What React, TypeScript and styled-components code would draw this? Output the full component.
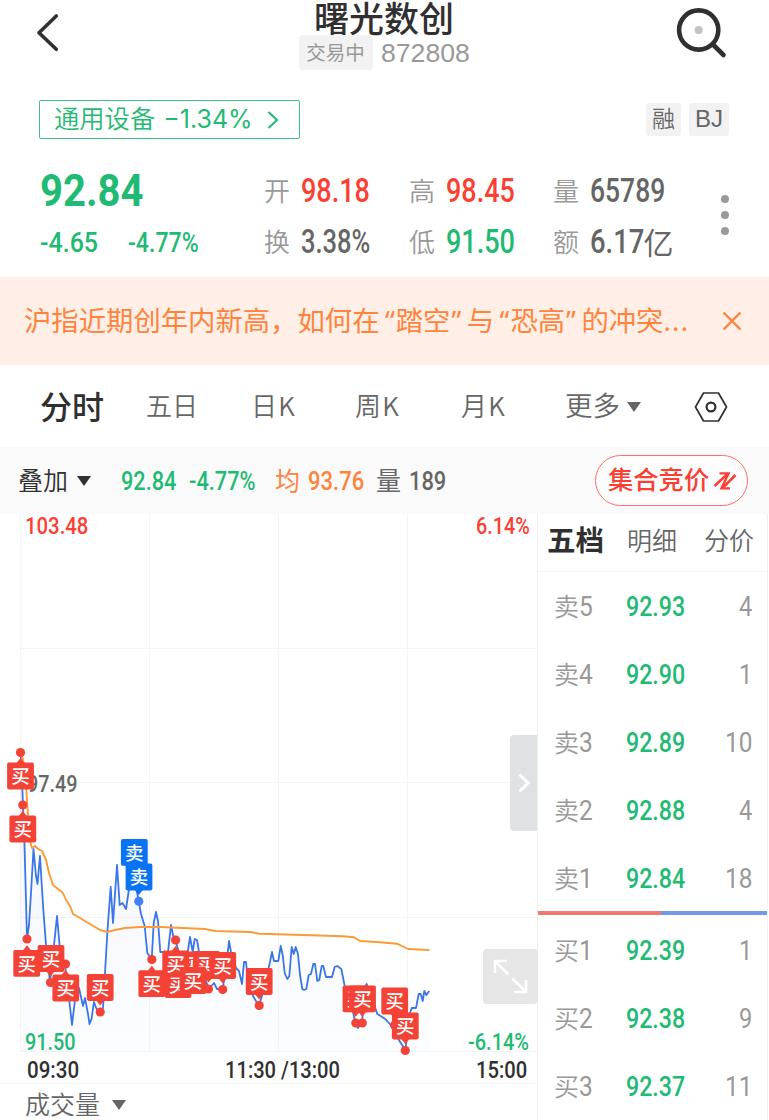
import React, { useLayoutEffect, useRef, useState } from 'react';
import styled, { createGlobalStyle } from 'styled-components';

const GREEN = '#1fba73';
const RED = '#fb3f33';
const ORANGE = '#ff833c';
const INK = '#303030';
const GREY = '#666';
const MUTED = '#999';

const Global = createGlobalStyle`
  * { box-sizing: border-box; }
  body { margin: 0; background: #fff; overflow: hidden; font-family: "Noto Sans CJK SC", sans-serif; }
`;

const Page = styled.div`
  width: 769px;
  height: 1120px;
  overflow: hidden;
  display: flex;
  flex-direction: column;
  background: #fff;
  color: ${INK};
`;

/* ---------- condensed figures ---------- */

const FigureBox = styled.span<{ $w: number; $size: number; $color: string; $weight: number; $font: string }>`
  display: inline-block;
  flex: none;
  width: ${p => p.$w}px;
  height: ${p => p.$size}px;
  line-height: ${p => p.$size}px;
  font-family: ${p => p.$font}, "Noto Sans CJK SC", sans-serif;
  font-size: ${p => p.$size}px;
  font-weight: ${p => p.$weight};
  color: ${p => p.$color};
  white-space: nowrap;
`;

const FigureText = styled.span`
  display: inline-block;
  transform-origin: 0 50%;
`;

type FigureProps = { w: number; size: number; color?: string; weight?: number; font?: string; children: string };

function Figure({ w, size, color = INK, weight = 500, font = 'Roboto', children }: FigureProps) {
  const ref = useRef<HTMLSpanElement>(null);
  const [scale, setScale] = useState(1);
  useLayoutEffect(() => {
    if (ref.current) setScale(w / ref.current.offsetWidth);
  }, [w, size, children]);
  return (
    <FigureBox $w={w} $size={size} $color={color} $weight={weight} $font={font}>
      <FigureText ref={ref} style={{ transform: `scaleX(${scale})` }}>{children}</FigureText>
    </FigureBox>
  );
}

const Label = styled.span<{ $size?: number; $color?: string; $weight?: number; $spacing?: number }>`
  flex: none;
  padding-bottom: 3px;
  font-size: ${p => p.$size ?? 26}px;
  line-height: 1;
  font-weight: ${p => p.$weight ?? 350};
  letter-spacing: ${p => p.$spacing ?? 0}px;
  color: ${p => p.$color ?? MUTED};
  white-space: nowrap;
`;

/* ---------- header ---------- */

const Header = styled.header`
  height: 99px;
  flex: none;
  display: flex;
  justify-content: space-between;
  align-items: flex-start;
  padding: 8px 42px 0 36px;
`;

const TitleBlock = styled.div`
  margin: -9px 0 0 31px;
  display: flex;
  flex-direction: column;
  align-items: center;
`;

const Title = styled.h1`
  margin: 0 0 1px;
  font-size: 35px;
  line-height: 35px;
  font-weight: 500;
`;

const CodeRow = styled.div`
  display: flex;
  align-items: center;
  gap: 8px;
`;

const Status = styled.span`
  width: 74px;
  height: 35px;
  border-radius: 4px;
  background: #f2f2f2;
  color: ${MUTED};
  font-size: 19.5px;
  line-height: 34px;
  text-align: center;
`;

const SectorRow = styled.div`
  height: 40px;
  flex: none;
  display: flex;
  justify-content: space-between;
  align-items: center;
  padding: 0 40px 0 39px;
`;

const Sector = styled.div`
  width: 261px;
  height: 39px;
  border: 1.5px solid #3cc286;
  border-radius: 2px;
  display: flex;
  align-items: center;
  padding: 1px 0 0 14px;
`;

const Tags = styled.div`
  display: flex;
  gap: 8px;
`;

const Tag = styled.span<{ $w: number }>`
  width: ${p => p.$w}px;
  height: 33px;
  border-radius: 3px;
  background: #f2f2f2;
  display: flex;
  align-items: center;
  justify-content: center;
`;

/* ---------- quote ---------- */

const Quote = styled.section`
  height: 138px;
  flex: none;
  display: grid;
  grid-template-columns: 224px 145px 144px 155px auto;
  grid-template-rows: 51px 51px;
  align-items: center;
  padding: 27px 0 0 40px;
`;

const Cell = styled.div<{ $gap?: number }>`
  display: flex;
  align-items: center;
  gap: ${p => p.$gap ?? 10.5}px;
`;

const Dots = styled.div`
  grid-column: 5;
  grid-row: 1 / 3;
  display: flex;
  flex-direction: column;
  gap: 8px;
  padding: 0 0 4px 12.5px;
`;

const Dot = styled.i`
  width: 8px;
  height: 8px;
  border-radius: 50%;
  background: ${MUTED};
`;

/* ---------- banner, tabs, toolbar ---------- */

const Banner = styled.div`
  height: 88px;
  flex: none;
  background: #ffefe6;
  display: flex;
  align-items: center;
  justify-content: space-between;
  padding: 0 27px 0 24px;
`;

const BannerText = styled.span`
  font-size: 27.35px;
  line-height: 1;
  padding-bottom: 1px;
  color: ${ORANGE};
  white-space: nowrap;
`;

const Mark = styled.span<{ $open?: boolean }>`
  display: inline-block;
  width: 16.3px;
  padding: 0 1px;
  text-align: ${p => (p.$open ? 'right' : 'left')};
  font-family: "Noto Sans", sans-serif;
  line-height: 1;
`;

const Ellipsis = styled.span`
  font-family: "Noto Sans", sans-serif;
  line-height: 1;
  letter-spacing: 1.3px;
`;

const Tabs = styled.nav`
  height: 82px;
  flex: none;
  display: grid;
  grid-template-columns: 106px 105px 104px 106px 104px 129px 40px;
  align-items: center;
  padding: 1px 0 0 40px;
`;

const Caret = styled.i<{ $color: string }>`
  border: 7px solid transparent;
  border-top: 10px solid ${p => p.$color};
  border-bottom: 0;
`;

const Toolbar = styled.div`
  height: 67px;
  flex: none;
  background: #fafafa;
  display: flex;
  align-items: center;
  padding: 0 21px 0 18px;
`;

const Space = styled.span<{ $w: number }>`
  flex: none;
  width: ${p => p.$w}px;
`;

const Auction = styled.button`
  margin: 0 0 0 auto;
  width: 153px;
  height: 51px;
  border: 1.3px solid #fa7068;
  border-radius: 26px;
  background: #fdfdfd;
  display: flex;
  align-items: center;
  padding: 0 0 0 12px;
  gap: 4px;
  font-family: inherit;
`;

/* ---------- body ---------- */

const Body = styled.main`
  flex: 1 1 0;
  min-height: 0;
  display: flex;
`;

const ChartPane = styled.div`
  position: relative;
  width: 537px;
  flex: none;
  display: flex;
  flex-direction: column;
`;

const Plot = styled.svg`
  display: block;
  flex: none;
`;

const Overlay = styled.div<{ $x: number; $y: number }>`
  position: absolute;
  left: ${p => p.$x}px;
  top: ${p => p.$y}px;
  display: flex;
`;

const Axis = styled.div`
  height: 32px;
  flex: none;
  display: grid;
  grid-template-columns: 198px 1fr auto;
  align-items: center;
  padding: 5px 10px 0 27px;
  border-bottom: 1px solid #f3f3f3;
`;

const Volume = styled.div`
  display: flex;
  align-items: center;
  gap: 12px;
  height: 42px;
  flex: none;
  padding-left: 25px;
`;

const Handle = styled.div`
  width: 27px;
  height: 96px;
  border-radius: 4px 0 0 4px;
  background: #dfe1e4;
  display: flex;
  align-items: center;
  justify-content: center;
`;

const Expand = styled.div`
  width: 55px;
  height: 55px;
  border-radius: 4px;
  background: #e6e6e6;
`;

const Book = styled.aside`
  width: 231px;
  flex: none;
  border-left: 1px solid #f0f0f0;
  border-right: 1px solid #f0f0f0;
  display: flex;
  flex-direction: column;
`;

const BookTabs = styled.div`
  height: 58px;
  flex: none;
  border-bottom: 1px solid #f3f3f3;
  margin-bottom: 1px;
  display: grid;
  grid-template-columns: 80px 77px 60px;
  align-items: center;
  padding: 0 0 3px 9px;
`;

const Level = styled.div`
  height: 68px;
  flex: none;
  display: grid;
  grid-template-columns: 72px 1fr auto;
  align-items: center;
  padding: 0 15px 0 16px;
`;

const LevelName = styled.span`
  display: flex;
  align-items: center;
`;

const Ratio = styled.div`
  height: 4px;
  flex: none;
  margin: -2px 0 2px;
  background: linear-gradient(90deg, #f07b73 0 123px, #7398eb 123px);
`;

/* ---------- data ---------- */

const PRICE =
  '20.5,752 22,780 23,805 24.5,845 26,900 27,939 29,925 31,893 33.5,849 36,876 37.5,884 40,856 43,905 46,945 50,982 54,945 57,916 60,950 65,965 68,990 70,1007 72,1025 75,1000 79,988 83,1006 85,998 88,1014 89.5,1024 91.5,1019 94,1002 97,1010 100,1012 103,1008 105,973 107.5,930 110.7,887 113,923 117,865 119.7,905 122.5,903 126,909 128.7,891 133,870 138.7,901 141,914 144.7,926 147.3,953 151.7,959 153.7,923 156,912 158,921 160.3,952 168,952 171,925 173,935 175.5,940 180,957 187,957 190,937 192.7,952 194.7,939 197,940 199,952 204,975 208.7,989 214,983 217,989 222.7,989 226,967 229,941 231,952 236,968 239,971 242,984 244,962 246,962 248,980 253,996 259,1006 262.7,993 270,962 272,952 274,961 278.3,961 280.7,946 282.7,955 284.7,973 287.3,979 289.3,976 291.7,947 293.7,954 295.7,947 298,954 300,975 302.3,989 304,990 306.3,989 308.7,975 311,974 313.3,964 315,964 317.3,981 319.3,980 321.7,966 323.3,966 326,977 332,977 334.7,967 337.3,966 341.3,969 344.7,986 352.7,1010 355.3,1023 358,1028 362,1023 365,987 366.7,984 375.3,1008 377.3,1014 380.7,1016 385.3,1019 390.7,1025 397,1037 405.3,1050 410,1013 411.7,1008 416,1008 418.7,994 420.7,994 422.7,1001 424.3,991 426.3,995 429.3,991';

const AVERAGE =
  '22,755 25,770 28,815 30.5,843 32,848 35,846 38,849 42,851 46,860 49,873 53,885 58,889 63,893 66,900 70,906 73,914 80,918 90,924 100,930 107,932 115,930 125,928 140,927 160,927 205,929 215,931 250,932 260,933.7 303,935 343,936.3 354,937.3 360,941 377,942 397,943.7 402,946 408,949 429.5,950';

type Trade = { x: number; y: number; dx?: number; dy?: number; sell?: boolean };
/* x, y: centre of the flag; dx, dy: the trade point on the line */
const TRADES: Trade[] = [
  { x: 20.5, y: 776, dx: 20.5, dy: 752.5 },
  { x: 22.8, y: 829, dx: 22.8, dy: 805 },
  { x: 26.7, y: 963.3, dx: 27, dy: 939 },
  { x: 51, y: 958.5, dx: 50.5, dy: 982.5 },
  { x: 65.8, y: 988, dx: 65.5, dy: 964 },
  { x: 100.2, y: 987.5, dx: 100.2, dy: 1012 },
  { x: 134.3, y: 852.3, sell: true },
  { x: 139, y: 877, dx: 138.8, dy: 901.3, sell: true },
  { x: 151.8, y: 983.7, dx: 151.8, dy: 959.5 },
  { x: 191, y: 965 },
  { x: 206.5, y: 964.5, dx: 208.5, dy: 989 },
  { x: 178, y: 984.5 },
  { x: 175.7, y: 964, dx: 175.6, dy: 940 },
  { x: 193, y: 980.5 },
  { x: 222.7, y: 965.5, dx: 222.7, dy: 989.5 },
  { x: 259.2, y: 981.5, dx: 259.2, dy: 1005.5 },
  { x: 356, y: 998.8, dx: 355.8, dy: 1023 },
  { x: 362.5, y: 998.8, dx: 362.3, dy: 1023 },
  { x: 394.7, y: 1001, dx: 394.7, dy: 1025 },
  { x: 405.3, y: 1026, dx: 405.3, dy: 1050.5 },
];

const SELLS = [['5', '92.93', '4'], ['4', '92.90', '1'], ['3', '92.89', '10'], ['2', '92.88', '4'], ['1', '92.84', '18']];
const BUYS = [['1', '92.39', '1'], ['2', '92.38', '9'], ['3', '92.37', '11']];

/* ---------- parts ---------- */

function Flag({ x, y, dx, dy, sell }: Trade) {
  const fill = sell ? '#0873f4' : '#f54236';
  const below = dy !== undefined && dy > y;
  const edge = below ? y + 13 : y - 13;
  const tip = below ? edge + 5 : edge - 5;
  return (
    <g>
      {dx !== undefined && <circle cx={dx} cy={dy} r={4.6} fill={sell ? '#4480fa' : fill} />}
      {dx !== undefined && <path d={`M${dx - 4} ${edge}L${dx} ${tip}L${dx + 4} ${edge}Z`} fill={fill} />}
      <rect x={x - 13.4} y={y - 13.4} width={26.8} height={26.8} rx={1.8} fill={fill} />
      <text x={x} y={y + 7.3} fontSize={18.5} textAnchor="middle" fill="#fff" fontWeight={500}>{sell ? '卖' : '买'}</text>
    </g>
  );
}

function Chart() {
  return (
    <Plot width={537} height={538} viewBox="0 514 537 538">
      <defs>
        <linearGradient id="area" x1="0" y1="0" x2="0" y2="1">
          <stop offset="0" stopColor="#3b78f0" stopOpacity="0.07" />
          <stop offset="1" stopColor="#3b78f0" stopOpacity="0.015" />
        </linearGradient>
      </defs>
      <path d="M20.5 514V1052M149.5 514V1052M278.5 514V1052M407.5 514V1052M20 648.5H537M20 782.5H537M20 917.5H537M20 1051.5H537" stroke="#f5f5f6" fill="none" />
      <polygon points={`${PRICE} 429.3,1052 20.5,1052`} fill="url(#area)" />
      <polyline points={PRICE} fill="none" stroke="#3a76ea" strokeWidth={1.8} strokeLinejoin="round" />
      <polyline points={AVERAGE} fill="none" stroke="#fd9a35" strokeWidth={1.9} strokeLinejoin="round" />
    </Plot>
  );
}

function Flags() {
  return (
    <Plot width={537} height={560} viewBox="0 514 537 560" fontFamily='"Noto Sans CJK SC", sans-serif'>
      {TRADES.map((t, i) => <Flag key={i} {...t} />)}
    </Plot>
  );
}

function Levels({ side, rows }: { side: string; rows: string[][] }) {
  return (
    <>
      {rows.map(([n, price, qty]) => (
        <Level key={n}>
          <LevelName>
            <Label $size={25}>{side}</Label>
            <Figure w={14} size={28} color={MUTED} weight={400}>{n}</Figure>
          </LevelName>
          <Figure w={59} size={27.5} color={GREEN}>{price}</Figure>
          <Figure w={qty.length * 13.5} size={28} color={MUTED} weight={400}>{qty}</Figure>
        </Level>
      ))}
    </>
  );
}

export default function App() {
  return (
    <Page>
      <Global />
      <Header>
        <svg width="26" height="50" viewBox="36 8 26 50" fill="none" stroke={INK} strokeWidth="3.6" strokeLinecap="round" strokeLinejoin="round">
          <path d="M56.3 16L39 32.7L56.3 49.3" />
        </svg>
        <TitleBlock>
          <Title>曙光数创</Title>
          <CodeRow>
            <Status>交易中</Status>
            <Figure w={89} size={26} color={MUTED} weight={400} font='"Liberation Sans"'>872808</Figure>
          </CodeRow>
        </TitleBlock>
        <svg width="52" height="52" viewBox="675 8 52 52" fill="none">
          <circle cx="698.7" cy="30" r="19.6" stroke={INK} strokeWidth="4.6" />
          <path d="M712.5 44L723.5 55" stroke={INK} strokeWidth="4.6" strokeLinecap="round" />
          <circle cx="698.7" cy="30" r="4" fill="#c2c2c2" />
        </svg>
      </Header>

      <SectorRow>
        <Sector>
          <Label $size={25.3} $color={GREEN}>通用设备</Label>
          <Space $w={8} />
          <Figure w={89} size={25} color={GREEN} weight={400} font="Inter">−1.34%</Figure>
          <Space $w={14} />
          <svg width="14" height="20" fill="none" stroke={GREEN} strokeWidth="2"><path d="M2.5 2L11 10L2.5 18" /></svg>
        </Sector>
        <Tags>
          <Tag $w={35}><Label $size={23} $color={GREY}>融</Label></Tag>
          <Tag $w={40}><Figure w={28} size={24} color={GREY} weight={400} font='"Liberation Sans"'>BJ</Figure></Tag>
        </Tags>
      </SectorRow>

      <Quote>
        <Cell><Figure w={103} size={43.5} color={GREEN} weight={700}>92.84</Figure></Cell>
        <Cell><Label>开</Label><Figure w={69} size={32.5} color={RED}>98.18</Figure></Cell>
        <Cell><Label>高</Label><Figure w={69} size={32.5} color={RED}>98.45</Figure></Cell>
        <Cell><Label>量</Label><Figure w={75} size={32.5} color={GREY}>65789</Figure></Cell>
        <Dots><Dot /><Dot /><Dot /></Dots>
        <Cell $gap={30}>
          <Figure w={58} size={28} color={GREEN}>-4.65</Figure>
          <Figure w={71} size={28} color={GREEN}>-4.77%</Figure>
        </Cell>
        <Cell><Label>换</Label><Figure w={69} size={32.5} color={GREY}>3.38%</Figure></Cell>
        <Cell><Label>低</Label><Figure w={69} size={32.5} color={GREEN}>91.50</Figure></Cell>
        <Cell $gap={0}>
          <Label>额</Label><Space $w={10.5} />
          <Figure w={54} size={32.5} color={GREY}>6.17</Figure>
          <Label $size={30} $color={GREY} $weight={400}>亿</Label>
        </Cell>
      </Quote>

      <Banner>
        <BannerText>
          沪指近期创年内新高，如何在<Mark $open>“</Mark>踏空<Mark>”</Mark>与<Mark $open>“</Mark>恐高<Mark>”</Mark>的冲突<Ellipsis>...</Ellipsis>
        </BannerText>
        <svg width="20" height="20" fill="none" stroke={ORANGE} strokeWidth="2.4"><path d="M1.5 1.5L18.5 18.5M18.5 1.5L1.5 18.5" /></svg>
      </Banner>

      <Tabs>
        <Label $size={32} $color={INK} $weight={500}>分时</Label>
        <Label $color={GREY}>五日</Label>
        <Label $color={GREY} $spacing={1.2}>日K</Label>
        <Label $color={GREY} $spacing={1.2}>周K</Label>
        <Label $color={GREY} $spacing={1.2}>月K</Label>
        <Cell $gap={7}><Label $size={27.5} $color={GREY}>更多</Label><Caret $color={GREY} /></Cell>
        <svg width="34" height="32" fill="none" stroke={INK} strokeWidth="1.7" strokeLinejoin="round">
          <path d="M9.5 2H24.5L32.5 16L24.5 30H9.5L1.5 16Z" />
          <circle cx="17" cy="16" r="4.4" strokeWidth="2.2" />
        </svg>
      </Tabs>

      <Toolbar>
        <Label $size={25} $color={INK}>叠加</Label>
        <Space $w={9} />
        <Caret $color={INK} />
        <Space $w={30} />
        <Figure w={55} size={26} color={GREEN}>92.84</Figure>
        <Space $w={13} />
        <Figure w={67} size={26} color={GREEN}>-4.77%</Figure>
        <Space $w={19} />
        <Label $size={25} $color={ORANGE} $weight={400}>均</Label>
        <Space $w={8} />
        <Figure w={56} size={26} color={ORANGE}>93.76</Figure>
        <Space $w={12} />
        <Label $size={25} $color={GREY} $weight={400}>量</Label>
        <Space $w={8} />
        <Figure w={37} size={26} color={GREY}>189</Figure>
        <Auction>
          <Label $size={25.3} $color={RED} $weight={500}>集合竞价</Label>
          <svg width="24" height="20" fill="none" stroke={RED}>
            <path d="M1.5 15L14 3.4M22.5 4L10 16.6" strokeWidth="2.6" />
            <path d="M6.5 2.4H15.5L8.5 17.4H17" strokeWidth="2.4" />
          </svg>
        </Auction>
      </Toolbar>

      <Body>
        <ChartPane>
          <Chart />
          <Overlay $x={25} $y={0}><Figure w={63} size={24.5} color={RED}>103.48</Figure></Overlay>
          <Overlay $x={476} $y={0}><Figure w={54} size={24.5} color={RED}>6.14%</Figure></Overlay>
          <Overlay $x={27} $y={258}><Figure w={51} size={24.5} color={GREY}>97.49</Figure></Overlay>
          <Overlay $x={25} $y={516}><Figure w={51} size={24.5} color={GREEN}>91.50</Figure></Overlay>
          <Overlay $x={468} $y={516}><Figure w={61} size={24.5} color={GREEN}>-6.14%</Figure></Overlay>
          <Overlay $x={0} $y={0}><Flags /></Overlay>
          <Overlay $x={510} $y={221}>
            <Handle>
              <svg width="14" height="20" fill="none" stroke="#fff" strokeWidth="3"><path d="M2.5 1.5L11 10L2.5 18.5" /></svg>
            </Handle>
          </Overlay>
          <Overlay $x={483} $y={435}>
            <Expand>
              <svg width="55" height="55" fill="none" stroke="#fff" strokeWidth="2.6">
                <path d="M12 24V12H24M12 12L25.5 25.5M43 31V43H31M43 43L29.5 29.5" />
              </svg>
            </Expand>
          </Overlay>
          <Axis>
            <Figure w={52} size={24.5}>09:30</Figure>
            <Figure w={115} size={24.5}>11:30 /13:00</Figure>
            <Figure w={51} size={24.5}>15:00</Figure>
          </Axis>
          <Volume>
            <Label $size={25} $color={GREY}>成交量</Label>
            <Caret $color={GREY} />
          </Volume>
        </ChartPane>

        <Book>
          <BookTabs>
            <Label $size={28.5} $color={INK} $weight={700}>五档</Label>
            <Label $size={25} $color={GREY}>明细</Label>
            <Label $size={25} $color={GREY}>分价</Label>
          </BookTabs>
          <Levels side="卖" rows={SELLS} />
          <Ratio />
          <Levels side="买" rows={BUYS} />
        </Book>
      </Body>
    </Page>
  );
}
